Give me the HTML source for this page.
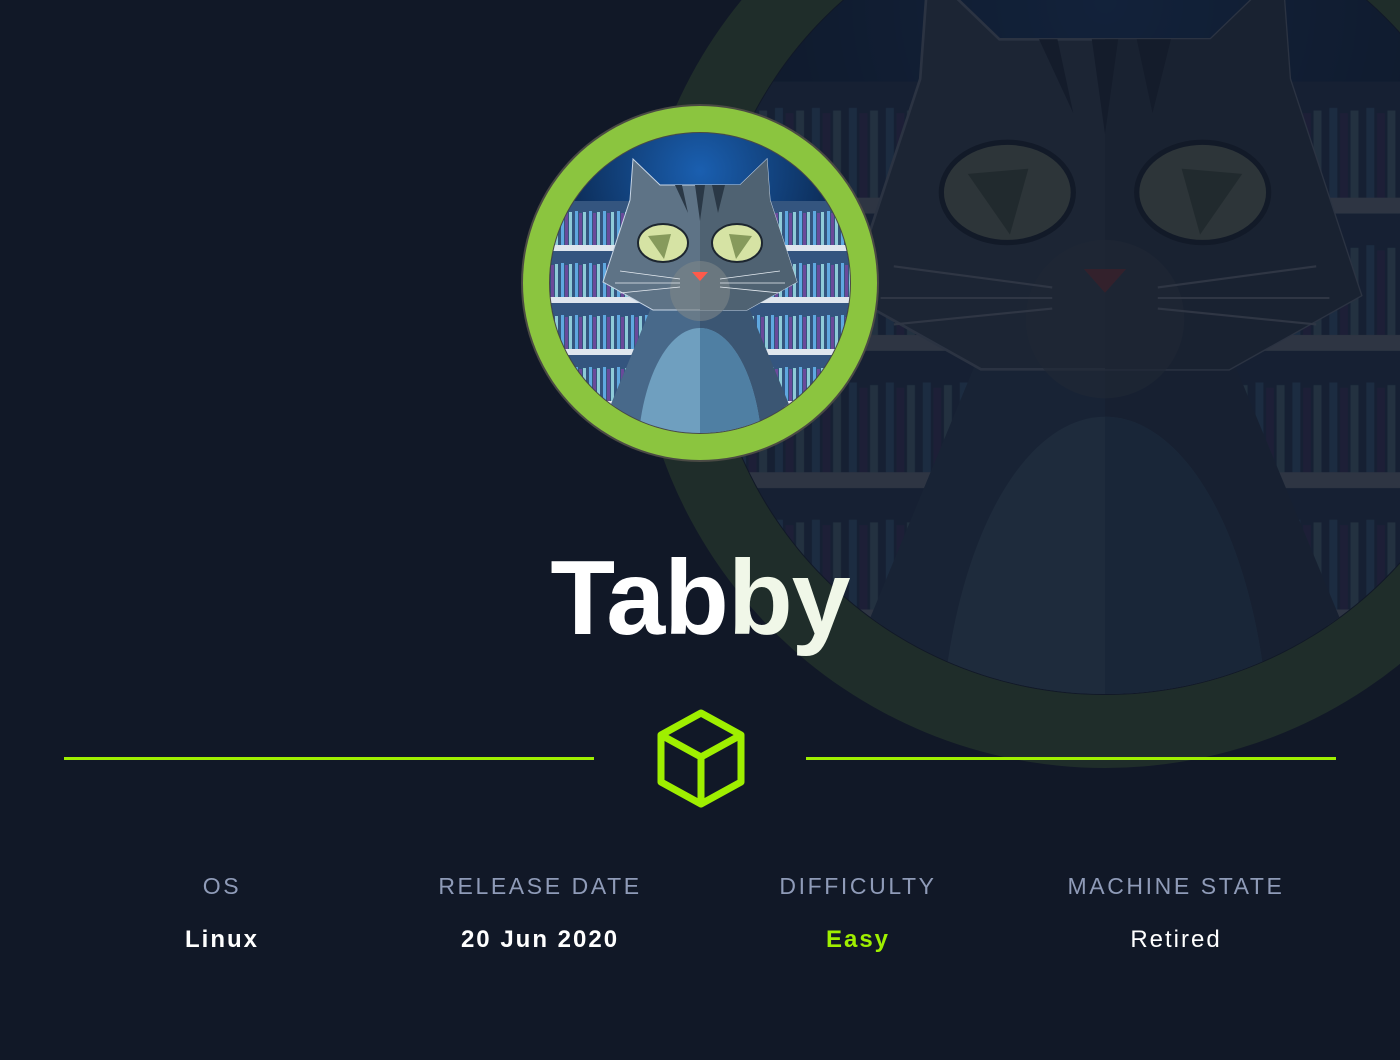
<!DOCTYPE html>
<html><head><meta charset="utf-8"><style>
html,body{margin:0;padding:0;background:#111827;width:1400px;height:1060px;overflow:hidden;font-family:"Liberation Sans",sans-serif}
svg{position:absolute;left:0;top:0}
.t{position:absolute;left:0;width:1400px;text-align:center;top:538px;font-size:106px;font-weight:bold;color:#fff;letter-spacing:-1px}
.col{position:absolute;width:320px;text-align:center}
.lab{top:873px;font-size:23px;color:#8f9bb8;letter-spacing:2.6px}
.val{top:926px;font-size:24px;color:#fff;letter-spacing:2px}
</style></head><body>
<svg width="1400" height="1060" viewBox="0 0 1400 1060">
<defs>
<clipPath id="cc"><circle cx="0" cy="0" r="150"/></clipPath>
<radialGradient id="sky" cx="0.5" cy="0.15" r="0.6"><stop offset="0" stop-color="#1a5fb0"/><stop offset="1" stop-color="#061630"/></radialGradient>
<pattern id="books" width="14" height="52" patternUnits="userSpaceOnUse" x="0" y="-80">
<rect width="14" height="52" fill="#34557f"/>
<rect x="1" y="8" width="3" height="34" fill="#5fa8e0"/>
<rect x="5" y="10" width="3" height="32" fill="#6a4a9a"/>
<rect x="9" y="9" width="3" height="33" fill="#8ecbd8"/>
<rect x="0" y="42" width="14" height="6" fill="#dfe6ee"/>
</pattern>
<g id="cat">
<g clip-path="url(#cc)">
<rect x="-160" y="-160" width="320" height="320" fill="url(#sky)"/>
<rect x="-160" y="-82" width="320" height="250" fill="url(#books)"/>
<path d="M-47,20 L-105,160 L105,160 L47,20 Z" fill="#3b5673"/>
<path d="M-47,20 L-105,160 L0,160 L0,20 Z" fill="#48698a"/>
<path d="M-62,160 C-57,90 -30,45 0,45 C30,45 57,90 62,160 Z" fill="#6f9fbf"/>
<path d="M0,45 C30,45 57,90 62,160 L0,160 Z" fill="#4f7fa3"/>
<path d="M-97,-1 L-70,-83 L-67,-124 L-40,-98 L40,-98 L67,-124 L70,-83 L97,-1 L47,27 L-47,27 Z" fill="#5e7386" stroke="#c8d6e6" stroke-width="1"/>
<path d="M0,-98 L40,-98 L67,-124 L70,-83 L97,-1 L47,27 L0,27 Z" fill="#4f6272"/>
<path d="M-25,-98 L-12,-70 L-18,-98 Z M-5,-98 L0,-62 L5,-98 Z M12,-98 L18,-70 L25,-98 Z" fill="#2a3846"/>
<circle cx="0" cy="8" r="30" fill="#7d8588" opacity="0.6"/>
<ellipse cx="-37" cy="-40" rx="25" ry="19" fill="#d6e3a4" stroke="#1d2630" stroke-width="2"/>
<ellipse cx="37" cy="-40" rx="25" ry="19" fill="#d6e3a4" stroke="#1d2630" stroke-width="2"/>
<path d="M-52,-47 L-36,-24 L-29,-49 Z M52,-47 L36,-24 L29,-49 Z" fill="#869a5c"/>
<path d="M-8,-11 L8,-11 L0,-2 Z" fill="#ff5a4a"/>
<path d="M-20,-4 L-80,-12 M-20,0 L-85,0 M-20,4 L-80,10 M20,-4 L80,-12 M20,0 L85,0 M20,4 L80,10" stroke="#e6ecf2" stroke-width="0.8"/>
</g>
</g>
</defs>
<g opacity="0.12">
<circle cx="1105" cy="298" r="470" fill="#8bc53f"/>
</g>
<circle cx="1105" cy="298" r="397" fill="#111827"/>
<g opacity="0.14">
<use href="#cat" transform="translate(1105,298) scale(2.64)"/>
</g>
<circle cx="700" cy="283" r="179" fill="#4a4a44"/>
<circle cx="700" cy="283" r="177" fill="#8bc53f"/>
<circle cx="700" cy="283" r="151" fill="#4a4a44"/>
<use href="#cat" transform="translate(700,283)"/>
<rect x="64" y="757" width="530" height="3" fill="#9fef00"/>
<rect x="806" y="757" width="530" height="3" fill="#9fef00"/>
<g fill="none" stroke="#9fef00" stroke-width="7" stroke-linejoin="round">
<path d="M701,713 L741,735 L741,782 L701,804 L661,782 L661,735 Z"/>
<path d="M661,735 L701,757 L741,735 M701,757 L701,804"/>
</g>
</svg>
<div class="t">Tab<span style="color:#f0f7e8">by</span></div>
<div class="col lab" style="left:62px">OS</div>
<div class="col lab" style="left:380px">RELEASE DATE</div>
<div class="col lab" style="left:698px">DIFFICULTY</div>
<div class="col lab" style="left:1016px">MACHINE STATE</div>
<div class="col val" style="left:62px;font-weight:bold">Linux</div>
<div class="col val" style="left:380px;font-weight:bold">20 Jun 2020</div>
<div class="col val" style="left:698px;font-weight:bold;color:#9fef00">Easy</div>
<div class="col val" style="left:1016px">Retired</div>
</body></html>
